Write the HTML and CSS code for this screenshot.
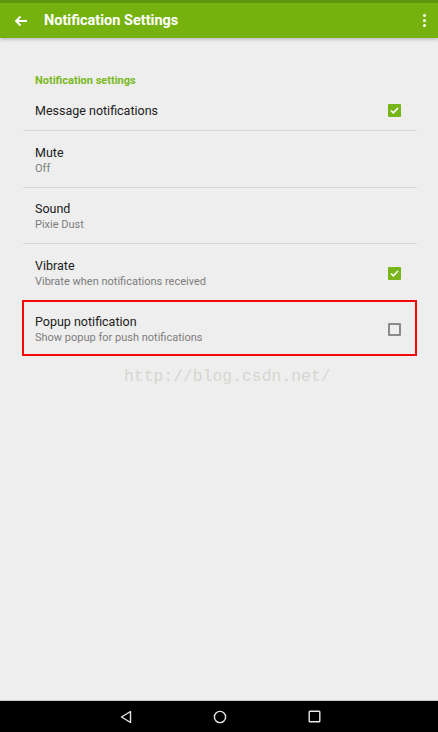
FILE: index.html
```html
<!DOCTYPE html>
<html lang="en">
<head>
    <meta charset="UTF-8">
    <meta name="viewport" content="width=device-width, initial-scale=1.0">
    <title>Notification Settings</title>
    <link rel="stylesheet" href="styles.css">
</head>
<body>
    <!-- status strip + toolbar -->
    <div class="status-bar"></div>
    <div class="toolbar">
        <svg class="back" width="14" height="12" viewBox="0 0 14 12">
            <path d="M13 6H2M6.5 1.5L2 6l4.5 4.5" fill="none" stroke="#fff" stroke-width="1.8"/>
        </svg>
        <h1>Notification Settings</h1>
        <div class="menu">
            <span></span><span></span><span></span>
        </div>
    </div>

    <!-- settings list -->
    <div class="main-content">
        <div class="settings">
            <div class="category">Notification settings</div>

            <div class="pref single">
                <div class="text">
                    <div class="title">Message notifications</div>
                </div>
                <span class="checkbox checked">
                    <svg width="9" height="7" viewBox="0 0 9 7"><path d="M1 3.5l2.3 2.3L8 1" fill="none" stroke="#fff" stroke-width="1.6"/></svg>
                </span>
            </div>

            <div class="pref">
                <div class="text">
                    <div class="title">Mute</div>
                    <div class="summary">Off</div>
                </div>
            </div>

            <div class="pref">
                <div class="text">
                    <div class="title">Sound</div>
                    <div class="summary">Pixie Dust</div>
                </div>
            </div>

            <div class="pref">
                <div class="text">
                    <div class="title">Vibrate</div>
                    <div class="summary">Vibrate when notifications received</div>
                </div>
                <span class="checkbox checked">
                    <svg width="9" height="7" viewBox="0 0 9 7"><path d="M1 3.5l2.3 2.3L8 1" fill="none" stroke="#fff" stroke-width="1.6"/></svg>
                </span>
            </div>

            <div class="pref highlight">
                <div class="text">
                    <div class="title">Popup notification</div>
                    <div class="summary">Show popup for push notifications</div>
                </div>
                <span class="checkbox"></span>
            </div>
        </div>

        <div class="watermark">http://blog.csdn.net/</div>
    </div>

    <!-- system navigation -->
    <div class="nav-bar">
        <svg width="12" height="14" viewBox="0 0 12 14">
            <path d="M10.5 1.5v11L1.5 7z" fill="none" stroke="#e8e8e8" stroke-width="1.4" stroke-linejoin="round"/>
        </svg>
        <svg width="14" height="14" viewBox="0 0 14 14">
            <circle cx="7" cy="7" r="5.6" fill="none" stroke="#e8e8e8" stroke-width="1.4"/>
        </svg>
        <svg width="13" height="13" viewBox="0 0 13 13">
            <rect x="1.2" y="1.2" width="10.6" height="10.6" rx="0.8" fill="none" stroke="#e8e8e8" stroke-width="1.4"/>
        </svg>
    </div>
</body>
</html>
```

FILE: styles.css
```css
/* base */
* {
    margin: 0;
    padding: 0;
    box-sizing: border-box;
}

body {
    font-family: Roboto, "Liberation Sans", Arial, sans-serif;
    background-color: #eeeeee;
    display: flex;
    flex-direction: column;
    height: 100vh;
    overflow: hidden;
}

/* top bars */
.status-bar {
    height: 3px;
    background-color: #5e960f;
}

.toolbar {
    height: 35px;
    background-color: #76b20f;
    display: flex;
    align-items: center;
    padding: 0 12px 0 14px;
    box-shadow: 0 2px 3px rgba(0, 0, 0, 0.18);
    position: relative;
    z-index: 1;
}

.toolbar .back {
    display: block;
    margin-right: 16px;
}

.toolbar h1 {
    flex: 1;
    color: #fff;
    font-size: 14.5px;
    font-weight: 700;
}

.menu {
    display: flex;
    flex-direction: column;
    gap: 2px;
}

.menu span {
    width: 3px;
    height: 3px;
    border-radius: 50%;
    background-color: #fff;
}

/* list */
.main-content {
    flex: 1;
}

.settings {
    margin: 0 21px 0 23px;
}

.category {
    margin-top: 33px;
    height: 20px;
    line-height: 20px;
    padding-left: 12px;
    color: #79b91c;
    font-size: 11px;
    font-weight: 700;
}

.pref {
    height: 56.5px;
    display: flex;
    align-items: center;
    padding: 4px 16px 0 12px;
    border-bottom: 1px solid #d8d8d8;
}

.pref.single {
    height: 40px;
    padding-top: 0;
}

.pref .text {
    flex: 1;
}

.title {
    color: #212121;
    font-size: 12.5px;
    line-height: 16px;
}

.summary {
    color: #7d7d7d;
    font-size: 11px;
    line-height: 16px;
}

.pref.highlight {
    border: 2px solid #f20a0a;
    margin: -1px 0 0 -1px;
    padding-left: 11px;
    padding-right: 14px;
}

.checkbox {
    width: 13px;
    height: 13px;
    border: 2px solid #8a8a8a;
    border-radius: 1px;
    display: flex;
    align-items: center;
    justify-content: center;
}

.checkbox.checked {
    border: none;
    background-color: #78b51b;
}

.watermark {
    margin: 11px 0 0 124px;
    font-family: "Liberation Mono", "Courier New", monospace;
    font-size: 16.4px;
    color: #d8d5ce;
}

/* bottom navigation */
.nav-bar {
    height: 32px;
    background-color: #000;
    border-top: 1px solid #c8c8c8;
    display: flex;
    align-items: center;
    justify-content: center;
    gap: 81px;
    padding-left: 3px;
}
```
